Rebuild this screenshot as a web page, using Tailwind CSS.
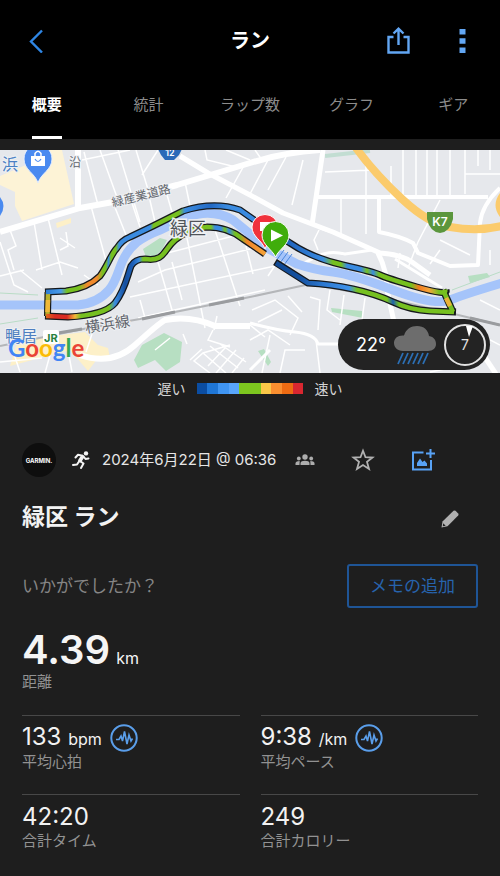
<!DOCTYPE html>
<html lang="ja">
<head>
<meta charset="utf-8">
<meta name="viewport" content="width=device-width, initial-scale=1">
<title>ラン</title>
<script src="https://cdn.jsdelivr.net/npm/@tailwindcss/browser@4"></script>
</head>
<body class="min-h-screen overflow-x-hidden bg-[#1e1e1e] font-['Inter','Noto_Sans_CJK_JP',sans-serif] text-white">

<header class="bg-black pt-4">
  <div class="grid h-[50px] grid-cols-3 items-center">
    <button class="ml-6 flex size-6 items-center justify-center" aria-label="戻る">
      <svg class="h-6 w-4" viewBox="0 0 16 24" fill="none" stroke="#2f86e4" stroke-width="2.4"><path d="M14 1.5 3 12.5 14 23.500"/></svg>
    </button>
    <h1 class="text-center text-[20px] leading-6 font-bold">ラン</h1>
    <div class="flex items-center justify-end gap-10 pr-[26px]">
      <button aria-label="共有">
        <svg class="h-7 w-6" viewBox="0 0 24 28" fill="none" stroke="#62a6f3" stroke-width="2.400"><path d="M7.500 10H2.500V25.500H22.500V10H17.500M12.500 18V2M7.500 6.500 12.500 1.700 17.500 6.500"/></svg>
      </button>
      <button class="flex w-6 justify-center" aria-label="メニュー">
        <svg class="h-6 w-2" viewBox="0 0 8 24" fill="#62a6f3"><path d="M1.500 0h6v5.500H1.500zM1.500 9.200h6v5.500H1.500zM1.500 18.400h6v5.600H1.500z"/></svg>
      </button>
    </div>
  </div>
  <nav class="-mx-1 grid h-[73px] grid-cols-5 text-center text-[15px] leading-6 text-[#8c8c8c]">
    <a href="#" class="mx-auto flex flex-col justify-between pt-[27px] font-bold text-white" aria-current="page">概要<span class="h-[3px] bg-white"></span></a>
    <a href="#" class="pt-[27px]">統計</a>
    <a href="#" class="pt-[27px]">ラップ数</a>
    <a href="#" class="pt-[27px]">グラフ</a>
    <a href="#" class="pt-[27px]">ギア</a>
  </nav>
</header>

<main>
  <section class="relative mt-[11px]" aria-label="地図">
    <svg class="block w-full" viewBox="0 150 500 223" font-family="'Noto Sans CJK JP', sans-serif">
      <defs>
        <linearGradient id="north" gradientUnits="userSpaceOnUse" x1="47" y1="0" x2="447" y2="0">
          <stop offset="0" stop-color="#2f7fd6"/><stop offset=".035" stop-color="#4a9be8"/><stop offset=".05" stop-color="#76c020"/><stop offset=".08" stop-color="#76c020"/><stop offset=".1" stop-color="#f08a2c"/><stop offset=".125" stop-color="#f08a2c"/><stop offset=".14" stop-color="#76c020"/><stop offset=".147" stop-color="#76c020"/><stop offset=".154" stop-color="#3a8be0"/><stop offset=".16" stop-color="#76c020"/><stop offset=".172" stop-color="#76c020"/><stop offset=".18" stop-color="#3a8be0"/><stop offset=".258" stop-color="#3a8be0"/><stop offset=".266" stop-color="#76c020"/><stop offset=".33" stop-color="#76c020"/><stop offset=".345" stop-color="#3a8be0"/><stop offset=".41" stop-color="#2269c4"/><stop offset=".45" stop-color="#3a8be0"/><stop offset=".52" stop-color="#3a8be0"/><stop offset=".6" stop-color="#1f62bb"/><stop offset=".69" stop-color="#3a8be0"/><stop offset=".715" stop-color="#76c020"/><stop offset=".735" stop-color="#76c020"/><stop offset=".75" stop-color="#3a8be0"/><stop offset=".785" stop-color="#3a8be0"/><stop offset=".8" stop-color="#76c020"/><stop offset=".815" stop-color="#3a8be0"/><stop offset=".83" stop-color="#76c020"/><stop offset=".91" stop-color="#76c020"/><stop offset=".93" stop-color="#f07a20"/><stop offset=".955" stop-color="#f5a63a"/><stop offset=".98" stop-color="#76c020"/>
        </linearGradient>
        <linearGradient id="south" gradientUnits="userSpaceOnUse" x1="47" y1="0" x2="447" y2="0">
          <stop offset="0" stop-color="#e0641c"/><stop offset=".02" stop-color="#d92b22"/><stop offset=".05" stop-color="#d92b22"/><stop offset=".07" stop-color="#f5b73a"/><stop offset=".085" stop-color="#76c020"/><stop offset=".155" stop-color="#76c020"/><stop offset=".17" stop-color="#3a8be0"/><stop offset=".195" stop-color="#154f9f"/><stop offset=".215" stop-color="#1d60b8"/><stop offset=".23" stop-color="#3a8be0"/><stop offset=".24" stop-color="#76c020"/><stop offset=".41" stop-color="#76c020"/><stop offset=".42" stop-color="#3a8be0"/><stop offset=".435" stop-color="#3a8be0"/><stop offset=".445" stop-color="#76c020"/><stop offset=".455" stop-color="#3a8be0"/><stop offset=".47" stop-color="#76c020"/><stop offset=".48" stop-color="#76c020"/><stop offset=".5" stop-color="#ef8428"/><stop offset=".55" stop-color="#f5a63a"/><stop offset=".56" stop-color="#0e4690"/><stop offset=".63" stop-color="#14509f"/><stop offset=".69" stop-color="#2c78d0"/><stop offset=".755" stop-color="#3f92ea"/><stop offset=".775" stop-color="#76c020"/><stop offset=".85" stop-color="#76c020"/><stop offset=".865" stop-color="#1d5fae"/><stop offset=".88" stop-color="#76c020"/>
        </linearGradient>
      </defs>
      <rect y="150" width="500" height="223" fill="#e6e8ec"/>

      <!-- Built-up areas and parks -->
      <path fill="#fdf3d6" d="M30 150H62L74 204 22 221 15 206 15 192 0 185V176L26 165Z"/>
      <path fill="#fdf0c8" d="M56 223 71 218 71 223 57 228ZM18 340 85 332 98 345 108 348 110 358 98 358 88 371 70 350 10 366Z"/>
      <path fill="#b7dfc2" d="M142 345 164 333 182 342 180 362 166 371 155 360 138 368 134 360Z"/>
      <path fill="#b7dfc2" d="M331 308 362 311 363 318 332 312ZM468 276 487 273 490 277 470 283ZM258 351 264 349 271 362 268 366Z"/>
      <path stroke="#c2ddd2" stroke-width="4" fill="none" d="M325 156 370 151"/>
      <path stroke="#b9dcc6" stroke-width="1" fill="none" d="M0 293 38 295M0 324 38 318M452 290 500 272"/>

      <!-- Minor streets -->
      <g fill="none" stroke="#fff" stroke-width="1.500">
        <path d="M82 160 130 150M84 152 98 205M100 150 118 200M118 150 140 222M136 150 150 196M158 150 142 175M91 206 108 268M112 200 128 240M130 197 140 227M148 192 155 222M165 188 172 212M185 182 190 206M34 222 42 270M48 218 62 275M60 238 75 248M0 242 14 285 28 292M66 232 68 246 60 250M10 230 16 246 8 250 14 270M36 270 60 262 78 268"/>
        <path d="M205 150 207 160 240 168M246 162 226 198M268 160 250 194M286 157 268 190M303 160 292 205M226 150 250 160M255 150 262 160M341 197V236M366 156V234M391 166V195M403 150V196M416 150V196M427 150V196M437 150V196M450 150V196M465 150V194M478 150V166M490 150V170M465 174H500M325 172 372 170M440 200 418 242M319 230 314 240 318 250M341 236 318 228"/>
        <path d="M187 238 205 328M158 262 172 310M215 230 240 306M246 246 253 274M138 282 165 270 262 246M148 258 245 233M130 297 275 266M140 300 145 318M138 318 265 290M172 262 182 300M268 276 276 264"/>
        <path d="M20 270 42 288M0 276 24 270M98 285 84 275M6 330 20 372M68 350 72 372M95 325 86 352M50 355 45 373M0 362 42 358M213 330 208 340 230 347M217 316 214 330M230 345 203 353 194 361 210 373M203 353 226 373M210 346 238 368M220 344 246 362M190 360 202 349M236 350 216 373M244 358 232 373M226 347 208 366M183 334 187 344M170 338 155 350"/>
        <path d="M252 310 275 300 298 318 290 335M258 322 282 310M250 340 268 330 290 345M310 297 320 300 318 330M330 290 327 310 340 320M344 295 340 325M288 296 302 312M270 335 262 373M280 373 285 350 305 350M316 340 320 373M250 325 265 337M365 298 362 320M470 255 440 240M418 242 408 268M400 253 398 268M440 250 430 264M452 320 500 345M480 300 500 310M490 250V265M430 372 450 368"/>
      </g>

      <!-- Main roads -->
      <g fill="none" stroke="#fff" stroke-linejoin="round">
        <path stroke-width="6" d="M0 232 80 208 113 202 177 185 250 163Q285 152 320 150"/>
        <path stroke-width="6" d="M78 150V209"/>
        <path stroke-width="5" d="M180 156 208 173 250 195 283 213 333 232 380 253Q400 254 412 262L430 275"/>
        <path stroke-width="5" d="M323 150 312 225M378 253Q387 270 387 290L394 322M480 350 496 374"/>
        <path stroke-width="4" d="M318 197H488M379 197V232Q400 236 413 243L418 253 450 266 478 265 480 223Q482 205 500 188"/>
        <path stroke-width="3" d="M300 265 318 256Q330 250 345 254L372 250M250 323Q275 330 295 332T318 344H345"/>
        <path stroke-width="6" d="M80 355Q112 366 135 345T165 320Q190 315 215 326H250"/>
        <path stroke-width="3" d="M250 370 270 350M395 259 442 288"/>
      </g>
      <g fill="none">
        <path stroke="#fbcb6c" stroke-width="8" d="M356 148Q375 174 402 199T450 227Q478 232 502 226"/>
        <path fill="#fbcb6c" d="M500 193Q491 205 500 217Z"/>
        <path stroke="#b4b6b9" stroke-width="2" d="M0 346 83 329 140 319 250 297 310 284 380 297 450 313 500 325"/>
        <path stroke="#9a9c9f" stroke-width="3" d="M58 333 82 329M142 319 175 312M209 305 244 298M470 318 500 325"/>
      </g>

      <!-- River -->
      <path fill="none" stroke="#a5c4fa" stroke-width="9" d="M0 305H78Q98 303 109 290C121 276 117 259 137 242Q147 235 160 230L187 217Q212 208 233 220L267 248 297 264Q315 270 333 272T393 290 450 300 502 283"/>
      <path fill="#b7dfc2" d="M143 249 160 238 167 240 162 250 155 256 146 257Z"/>
      <path stroke="#4b86db" stroke-width="1" fill="none" d="M280 263 288 252M284 265 292 254M276 261 284 250"/>

      <!-- Activity track coloured by pace -->
      <g fill="none" stroke-linejoin="round">
        <g stroke="#15181c" stroke-width="7">
          <path d="M443 290 453 312"/>
          <path d="M48 292 47.500 316"/>
          <path d="M45 292 66 291Q88 288 100 276C108 265 111 254 117 248Q122 240 130 237L153 226 183 211Q214 201 240 210L257 222 290 243Q312 258 343 265T380 275 417 287 446 290"/>
          <path d="M45 316 68 317Q105 315 115 303C125 290 127 277 131 266Q135 259 145 259C165 262 163 250 175 240Q190 228 207 227 228 227 243 239L265 254M275 262 308 283Q330 284 353 289T393 302 430 311L456 312"/>
        </g>
        <g stroke-width="4.500">
          <path stroke="#b9b22c" d="M48 292 47.500 316"/>
          <path stroke="#f0b838" d="M48 300 47.500 312"/>
          <path stroke="url(#north)" d="M46 292 66 291Q88 288 100 276C108 265 111 254 117 248Q122 240 130 237L153 226 183 211Q214 201 240 210L257 222 290 243Q312 258 343 265T380 275 417 287 445 290"/>
          <path stroke="url(#south)" d="M46 316 68 317Q105 315 115 303C125 290 127 277 131 266Q135 259 145 259C165 262 163 250 175 240Q190 228 207 227 228 227 243 239L265 254M276 263 308 283Q330 284 353 289T393 302 430 311L454 312"/>
          <path stroke="#76c020" d="M443 290 453 312"/>
          <path stroke="#e8b23a" d="M446 298 450 306"/>
        </g>
      </g>

      <!-- Place labels -->
      <g fill="#62666d" stroke="#eef0f3" stroke-width="2" paint-order="stroke" font-size="12">
        <text transform="translate(113 207) rotate(-14)">緑産業道路</text>
        <text transform="translate(86 333) rotate(-9)" font-size="15">横浜線</text>
        <text x="69" y="167">沿</text>
        <text x="170" y="235" font-size="18" fill="#50545a" stroke-width="3">緑区</text>
        <text x="2" y="170" font-size="16" fill="#4a80c4">浜</text>
        <text x="5" y="342" font-size="16" fill="#4f7fc0">鴨居</text>
      </g>
      <rect x="43" y="330" width="16" height="14" rx="2" fill="#fff"/>
      <text x="44" y="342" font-family="Inter" font-size="11" font-weight="700" fill="#27813f">JR</text>

      <!-- Markers and road shields -->
      <path fill="#4a8af0" stroke="#e8f0fe" stroke-width="1" d="M38 183C35 173 24 170 24 159 24 154 26 151 28 149H48C50 151 52 154 52 159 52 170 41 173 38 183Z"/>
      <path fill="#fff" d="M31 156H45V166H31Z"/>
      <path fill="none" stroke="#fff" stroke-width="1.500" d="M35 156V153.500Q38 149 41 153.500V156"/>
      <path fill="none" stroke="#4a8af0" stroke-width="1.200" d="M35 159Q38 164 41 159"/>
      <path fill="#4a8af0" d="M0 197Q7 206 0 216Z"/>
      <path fill="#2a6ab8" d="M158 149H182L179 155 174 160H165L161 155Z"/>
      <text x="170" y="156" text-anchor="middle" font-family="Inter" font-size="9" font-weight="600" fill="#fff">12</text>
      <path fill="#5b963d" d="M427 212H453V219Q450 232 440 233 430 232 427 219Z"/>
      <text x="440" y="226" text-anchor="middle" font-family="Inter" font-size="12" font-weight="600" fill="#fff">K7</text>
      <path fill="#f0323c" stroke="#fff" stroke-width="1" d="M265 249C262 240 252 237 252 227A13 12.500 0 0 1 278 227C278 237 268 240 265 249Z"/>
      <path fill="#fff" d="M260 222H270V231H260Z"/>
      <path fill="#40ad0b" stroke="#fff" stroke-width="1" d="M275.500 257C272 249 262 245 262 235A13.500 13.500 0 0 1 289 235C289 245 279 249 275.500 257Z"/>
      <path fill="#fff" d="M271 229.500 283 235.500 271 241.500Z"/>

      <text x="8" y="357" font-family="Lato" font-size="24" font-weight="700"><tspan fill="#4285f4">G</tspan><tspan fill="#ea4335">o</tspan><tspan fill="#fbbc05">o</tspan><tspan fill="#4285f4">g</tspan><tspan fill="#34a853">l</tspan><tspan fill="#ea4335">e</tspan></text>
    </svg>

    <div class="absolute right-[10px] bottom-[3px] flex h-[51px] w-[152px] items-center justify-between rounded-full bg-[#232323] pr-1 pl-[18px]">
      <span class="text-[18px] leading-6">22°</span>
      <svg class="h-10 w-11" viewBox="0 0 44 40" aria-label="雨">
        <path fill="#6d6d6d" d="M10 26C4 26 1 22 1 18 1 13 5 10 11 10.500 13 4 18 1 24 1 31 1 35 5 36 11 41 12 43 15 43 19 43 23 40 26 35 26Z"/>
        <path stroke="#2c6fb4" stroke-width="1.800" d="M10 28 5 39M15 28 10 39M20 28 15 39M25 28 20 39M30 28 25 39M35 28 30 39"/>
      </svg>
      <div class="relative flex size-[42px] items-center justify-center rounded-full border-2 border-[#e2e2e2] text-[14px] text-[#e2e2e2]">
        <svg class="absolute top-0 left-[19px] h-3 w-2" viewBox="0 0 8 12" fill="#fff"><path d="M1 0H8L4 11Z"/></svg>
        7
      </div>
    </div>
  </section>

  <div class="flex h-[31px] items-center justify-center gap-[11px] text-[14px] leading-6 text-[#d4d4d4]">
    <span>遅い</span>
    <div class="grid h-[11px] w-[107px] grid-cols-10">
      <span class="bg-[#0b4da2]"></span><span class="bg-[#1f76d6]"></span><span class="bg-[#4095f2]"></span><span class="bg-[#58a5fb]"></span><span class="bg-[#7dc61f]"></span><span class="bg-[#7dc61f]"></span><span class="bg-[#fac748]"></span><span class="bg-[#fa8f30]"></span><span class="bg-[#ee6b13]"></span><span class="bg-[#d92730]"></span>
    </div>
    <span>速い</span>
  </div>

  <section class="px-[22px] pt-[38px]">
    <div class="flex h-9 items-center">
      <span class="flex size-[34px] items-center justify-center rounded-full bg-[#0e0e0e] text-[6px] font-bold">GARMIN.</span>
      <svg class="ml-4 h-[18px] w-[18px]" viewBox="0 0 18 18" fill="none" stroke="#f4f4f4" stroke-linecap="round" stroke-linejoin="round" aria-label="ランニング"><circle cx="14" cy="2.400" r="2.200" fill="#f4f4f4" stroke="none"/><path stroke-width="3.800" d="M10.500 5.800 8 9.500"/><path stroke-width="2" d="M10.500 4.700 6 3.800 3.500 6.500M12 6 13.500 8 16.500 7.500M8 10 11.500 12.500 9 17M7 10.500 5 13.500 1 14"/></svg>
      <time class="ml-3 text-[15px] leading-6 whitespace-nowrap text-[#e6e6e6]">2024年6月22日 @ 06:36</time>
      <div class="ml-auto flex items-center pr-[43px]">
        <svg class="h-3 w-5" viewBox="0 0 20 12" fill="#adadad" aria-label="公開範囲"><circle cx="10" cy="3" r="2.700"/><circle cx="3.800" cy="4.500" r="1.900"/><circle cx="16.200" cy="4.500" r="1.900"/><path d="M5.500 11V9Q6 6.700 10 6.700T14.500 9V11ZM.5 11V9Q1 7 4.700 7L4.500 11ZM19.500 11V9Q19 7 15.300 7L15.500 11Z"/></svg>
        <button class="ml-9" aria-label="お気に入り"><svg class="size-6" viewBox="0 0 24 24" fill="none" stroke="#b2b2b2" stroke-width="1.800"><path d="M12 2.700 14.500 9.200 21.500 9.500 16 13.900 18 21 12 17 6 21 8 13.900 2.500 9.500 9.500 9.200Z"/></svg></button>
        <button class="ml-9" aria-label="写真を追加"><svg class="size-6" viewBox="0 0 24 24"><path fill="none" stroke="#58a2f5" stroke-width="2" d="M12.500 4.500H2V21.500H20V12M15 5.500H24M19.500 1V10"/><path fill="#58a2f5" d="M6 18V15L9 10.500 11.500 14 13.500 12.500 16 15.500V18Z"/></svg></button>
      </div>
    </div>

    <div class="mt-5 flex h-[38px] items-center justify-between pr-[19px]">
      <h2 class="text-[23px] leading-9 font-bold text-[#f2f2f2]">緑区 ラン</h2>
      <button class="mt-1" aria-label="名前を編集"><svg class="size-[18px]" viewBox="0 0 18 18" fill="#b0b0b0"><path d="M.5 17.500 1.500 11.500 12.500.8Q13.500 0 14.500.8L17.200 3.500Q18 4.500 17.200 5.500L6.500 16.300Z"/><path fill="#1e1e1e" d="M2.200 13.200 4.700 15.700 1.800 16.200Z"/></svg></button>
    </div>

    <div class="mt-7 flex h-11 items-center justify-between">
      <p class="text-[17px] leading-6 text-[#858585]">いかがでしたか？</p>
      <button class="h-11 w-[131px] rounded-[3px] border-2 border-[#1f5596] text-[17px] leading-6 text-[#2763ad]">メモの追加</button>
    </div>

    <dl class="mt-5 grid grid-cols-2 gap-x-[21px] [&_dt]:text-[15px] [&_dt]:leading-5 [&_dt]:text-[#929292]">
      <div class="col-span-2 flex h-[87px] flex-col-reverse justify-end">
        <dt>距離</dt>
        <dd class="h-[44px] text-[40px] leading-[44px] font-semibold text-[#f5f5f5]">4.39 <span class="-ml-1 text-[16px] font-normal">km</span></dd>
      </div>
      <div class="flex h-[79px] flex-col-reverse justify-end border-t border-[#484848] pt-2">
        <dt>平均心拍</dt>
        <dd class="flex h-7 items-center text-[24px] leading-7 text-[#f2f2f2]"><span>133 <span class="text-[16px]">bpm</span></span>
          <svg class="ml-2 size-7" viewBox="0 0 28 28" fill="none" stroke="#5a9eea"><circle cx="14" cy="14" r="12.700" stroke-width="2"/><path stroke-width="1.600" d="M6 15.500H9L11 12 12.500 17 14.500 7.500 17 20 19 11 21 17 22.500 14.500"/></svg></dd>
      </div>
      <div class="flex h-[79px] flex-col-reverse justify-end border-t border-[#484848] pt-2">
        <dt>平均ペース</dt>
        <dd class="flex h-7 items-center text-[24px] leading-7 text-[#f2f2f2]"><span>9:38 <span class="text-[16px]">/km</span></span>
          <svg class="ml-2 size-7" viewBox="0 0 28 28" fill="none" stroke="#5a9eea"><circle cx="14" cy="14" r="12.700" stroke-width="2"/><path stroke-width="1.600" d="M6 15.500H9L11 12 12.500 17 14.500 7.500 17 20 19 11 21 17 22.500 14.500"/></svg></dd>
      </div>
      <div class="flex h-[79px] flex-col-reverse justify-end border-t border-[#484848] pt-2">
        <dt>合計タイム</dt>
        <dd class="h-7 text-[24px] leading-7 text-[#f2f2f2]">42:20</dd>
      </div>
      <div class="flex h-[79px] flex-col-reverse justify-end border-t border-[#484848] pt-2">
        <dt>合計カロリー</dt>
        <dd class="h-7 text-[24px] leading-7 text-[#f2f2f2]">249</dd>
      </div>
    </dl>
  </section>
</main>
</body>
</html>
